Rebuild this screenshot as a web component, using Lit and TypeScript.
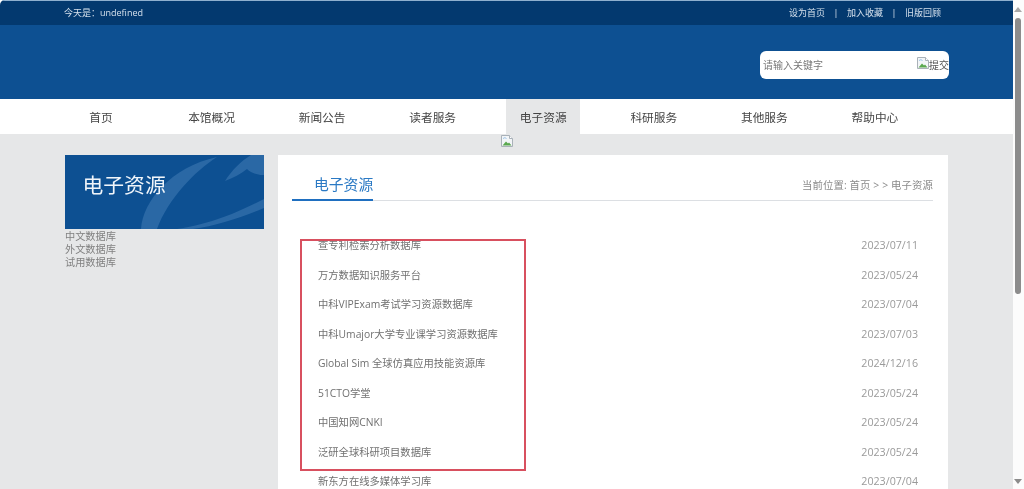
import { LitElement, html, css, svg } from "lit";
import { customElement } from "lit/decorators.js";

const NAV = ["首页", "本馆概况", "新闻公告", "读者服务", "电子资源", "科研服务", "其他服务", "帮助中心"];
const ROWS: [string, string][] = [
  ["查专利检索分析数据库", "2023/07/11"],
  ["万方数据知识服务平台", "2023/05/24"],
  ["中科VIPExam考试学习资源数据库", "2023/07/04"],
  ["中科Umajor大学专业课学习资源数据库", "2023/07/03"],
  ["Global Sim 全球仿真应用技能资源库", "2024/12/16"],
  ["51CTO学堂", "2023/05/24"],
  ["中国知网CNKI", "2023/05/24"],
  ["泛研全球科研项目数据库", "2023/05/24"],
  ["新东方在线多媒体学习库", "2023/07/04"],
];

const broken = svg`<svg class="broken" viewBox="0 0 14 14" width="14" height="14">
  <path d="M1.5 1.5H9.5L12.5 4.5V12.5H1.5Z" fill="#f2f5f7" stroke="#a9b1b8"/>
  <path d="M9.5 1.5V4.5H12.5" fill="#fff" stroke="#a9b1b8"/>
  <path d="M2.5 11.5L6 7.5L8 9.5L9 8.5L11.5 11.5Z" fill="#5aa84f"/>
  <path d="M3 4.5Q5 2.8 6.5 4.5" fill="none" stroke="#9cc3e8"/>
</svg>`;

@customElement("app-root")
export class AppRoot extends LitElement {
  static styles = css`
    :host {
      display: block;
      position: relative;
      width: 1024px;
      height: 489px;
      overflow: hidden;
      background: #fff;
      font-family: "Open Sans", "Noto Sans CJK SC", "Noto Sans", sans-serif;
      color: #666;
    }
    .page {
      width: 1013px;
      height: 489px;
      overflow: hidden;
      background: #e6e7e8;
      border-top-left-radius: 5px;
      filter: blur(0.4px);
    }
    .wrap {
      width: 885px;
      margin-left: 64px;
      box-sizing: border-box;
    }
    .top {
      height: 25px;
      box-sizing: border-box;
      border-top: 1px solid #8fb0cf;
      background: #03396f;
      color: #d5e0ec;
      font-size: 9px;
    }
    .top .wrap {
      display: flex;
      justify-content: space-between;
      align-items: center;
      height: 23px;
      padding-right: 8px;
    }
    .top-links {
      display: flex;
      gap: 8.5px;
      align-items: center;
    }
    .head {
      height: 74px;
      background: #0d5092;
    }
    .head .wrap {
      display: flex;
      justify-content: flex-end;
      padding-top: 26px;
    }
    .search {
      width: 189px;
      height: 28px;
      background: #fff;
      border-radius: 6px;
      display: flex;
      align-items: center;
      justify-content: space-between;
      padding-left: 3px;
      padding-bottom: 1px;
      box-sizing: border-box;
      font-size: 10px;
      color: #777;
    }
    .submit {
      display: flex;
      align-items: center;
      color: #555;
      font-size: 10px;
    }
    .submit .broken {
      margin-right: -1px;
      margin-top: -3px;
    }
    .nav {
      height: 35px;
      background: #fff;
    }
    .nav .wrap {
      display: flex;
      justify-content: space-between;
      width: 848px;
      margin-left: 64px;
    }
    .nav-item {
      width: 74px;
      height: 35px;
      line-height: 37px;
      text-align: center;
      font-size: 11.7px;
      color: #444;
    }
    .nav-item.on {
      background: #e6e7e8;
    }
    .banner {
      height: 21px;
      display: flex;
      justify-content: center;
    }
    .main {
      display: flex;
      align-items: flex-start;
      gap: 14px;
      margin-left: 65px;
    }
    .side {
      width: 199px;
      flex: none;
    }
    .side-head {
      position: relative;
      height: 74px;
      background: #0d5092;
      overflow: hidden;
      color: #f0f5fa;
      font-size: 20.8px;
      line-height: 61px;
      padding-left: 17.5px;
    }
    .side-head svg {
      position: absolute;
      left: 0;
      top: 0;
    }
    .side-head span {
      position: relative;
    }
    .side-list {
      margin-top: 1px;
      font-size: 10.2px;
      line-height: 13px;
      color: #808080;
    }
    .panel {
      width: 670px;
      height: 400px;
      background: #fff;
      padding: 0 15px 0 14px;
      box-sizing: border-box;
    }
    .panel-head {
      height: 45px;
      border-bottom: 1px solid #dcdfe3;
      display: flex;
      justify-content: space-between;
      align-items: flex-start;
    }
    .title {
      width: 81px;
      height: 46px;
      flex: none;
      box-sizing: border-box;
      border-bottom: 2px solid #1f6fc0;
      padding-left: 22px;
      font-size: 14.8px;
      line-height: 59px;
      color: #2a79c4;
      white-space: nowrap;
    }
    .crumb {
      font-size: 10.4px;
      line-height: 32px;
      margin-top: 14px;
      color: #8a8a8a;
      letter-spacing: 0.1px;
    }
    .rows {
      padding: 30px 15px 0 26px;
    }
    .row {
      display: flex;
      justify-content: space-between;
      height: 29.5px;
      line-height: 29.5px;
      font-size: 10.3px;
      color: #707070;
    }
    .row .date {
      color: #9a9a9a;
      font-size: 10.7px;
    }
    .mark {
      position: absolute;
      left: 300px;
      top: 239px;
      width: 226px;
      height: 232px;
      box-sizing: border-box;
      border: 2px solid #d8505f;
      pointer-events: none;
    }
    .scroll {
      position: absolute;
      right: 0;
      top: 0;
      width: 11px;
      height: 489px;
      background: #fcfcfc;
      box-sizing: border-box;
    }
    .thumb {
      position: absolute;
      left: 2px;
      top: 18px;
      width: 6px;
      height: 276px;
      border-radius: 3px;
      background: #8c8c8c;
    }
    .arrow {
      position: absolute;
      left: 1px;
      width: 0;
      height: 0;
      border: 4px solid transparent;
    }
    .arrow.up {
      top: 7px;
      border-top: 0;
      border-bottom: 5px solid #a8a8a8;
    }
    .arrow.down {
      bottom: 5px;
      border-bottom: 0;
      border-top: 5px solid #8c8c8c;
    }
  `;

  render() {
    return html`
      <div class="page">
        <div class="top">
          <div class="wrap">
            <span>今天是：undefined</span>
            <span class="top-links">
              <span>设为首页</span><span>|</span><span>加入收藏</span><span>|</span><span>旧版回顾</span>
            </span>
          </div>
        </div>
        <div class="head">
          <div class="wrap">
            <div class="search">
              <span>请输入关键字</span>
              <span class="submit">${broken}<span>提交</span></span>
            </div>
          </div>
        </div>
        <div class="nav">
          <div class="wrap">
            ${NAV.map((n) => html`<div class="nav-item ${n === "电子资源" ? "on" : ""}">${n}</div>`)}
          </div>
        </div>
        <div class="banner">${broken}</div>
        <div class="main">
          <aside class="side">
            <div class="side-head">
              <svg width="199" height="74" viewBox="0 0 199 74" fill="#2a68a5">
                <path d="M76 74C78 46 106 12 152 2C130 16 103 44 92 74Z"/>
                <path d="M112 74C150 68 175 56 199 44V53C175 63 150 71 128 74Z"/>
                <path d="M160 26C167 15 176 6 186 0H199V20C191 20 185 17 182 14C176 19 168 23 160 26Z"/>
              </svg>
              <span>电子资源</span>
            </div>
            <div class="side-list">
              <div>中文数据库</div>
              <div>外文数据库</div>
              <div>试用数据库</div>
            </div>
          </aside>
          <section class="panel">
            <div class="panel-head">
              <div class="title">电子资源</div>
              <div class="crumb">当前位置: 首页 &gt; &gt; 电子资源</div>
            </div>
            <div class="rows">
              ${ROWS.map(([t, d]) => html`<div class="row"><span>${t}</span><span class="date">${d}</span></div>`)}
            </div>
          </section>
        </div>
      </div>
      <div class="mark"></div>
      <div class="scroll">
        <div class="arrow up"></div>
        <div class="thumb"></div>
        <div class="arrow down"></div>
      </div>
    `;
  }
}
